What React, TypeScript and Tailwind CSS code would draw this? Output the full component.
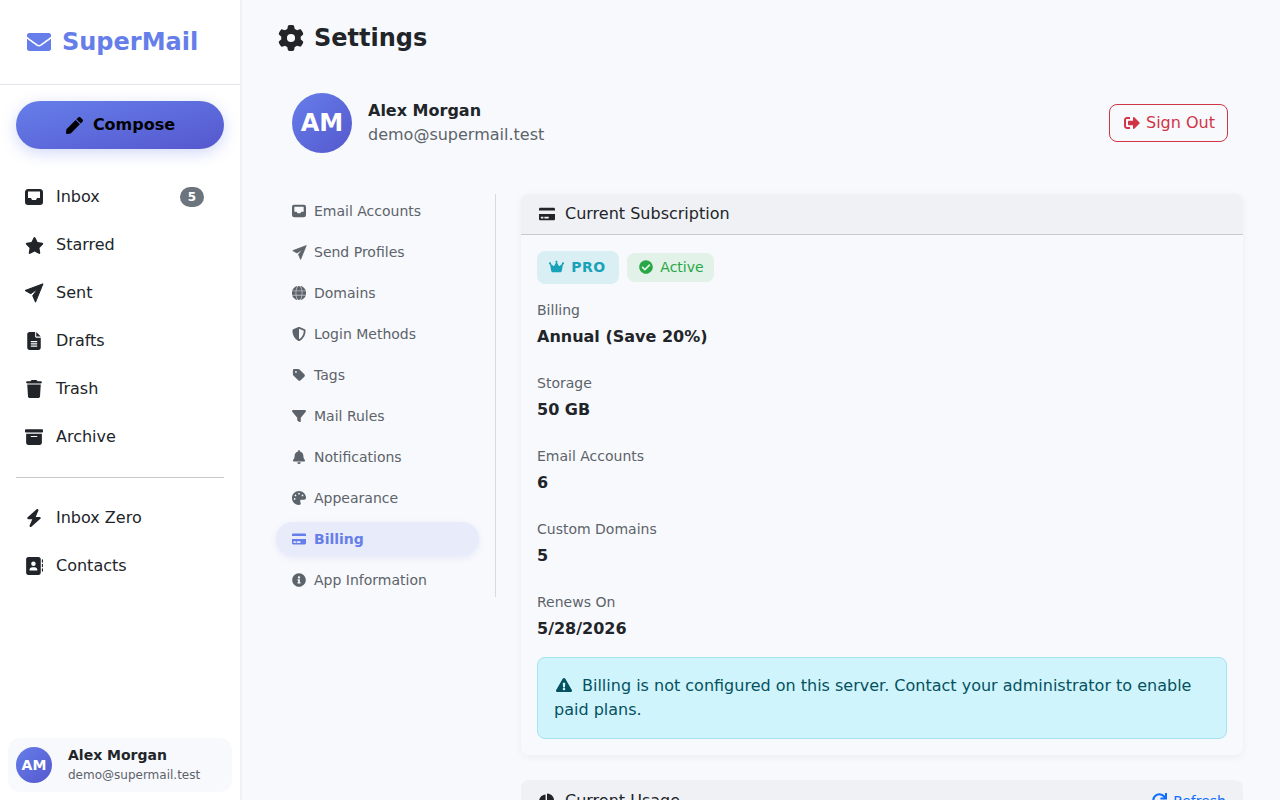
import type { ReactNode } from 'react';
import {
  FaSignOutAlt, FaShieldAlt, FaCreditCard, FaInfoCircle, FaCheckCircle, FaChartPie, FaRedo, FaEnvelope, FaPen,
  FaExclamationTriangle,
} from 'react-icons/fa';
import {
  FaBolt, FaStar, FaFileLines, FaTrash, FaBoxArchive, FaAddressBook, FaGear, FaGlobe, FaTag, FaFilter, FaBell,
  FaPalette, FaCrown,
} from 'react-icons/fa6';

const InboxIcon = ({ size }: { size: number }) => (
  <svg width={size} height={size} viewBox="0 0 18 18" fill="currentColor">
    <path
      fillRule="evenodd"
      d="M3.5 1h11A3 3 0 0 1 18 4v10a3 3 0 0 1-3 3H3a3 3 0 0 1-3-3V4a3 3 0 0 1 3.5-3zM3 3.5V10h3l1 2h4l1-2h3V3.5z"
    />
  </svg>
);

const PlaneIcon = ({ size }: { size: number }) => (
  <svg width={size} height={size} viewBox="0 0 20 20" fill="currentColor" stroke="currentColor" strokeWidth="1" strokeLinejoin="round">
    <path d="M19 .8 1 7.5l5.8 3.2L14 5.5l-5.3 7.2 2.8 6.5z" />
  </svg>
);

const mainNav = [
  { label: 'Inbox', icon: <InboxIcon size={18} />, badge: '5' },
  { label: 'Starred', icon: <FaStar size={19} /> },
  { label: 'Sent', icon: <PlaneIcon size={20} /> },
  { label: 'Drafts', icon: <FaFileLines size={18} /> },
  { label: 'Trash', icon: <FaTrash size={18} /> },
  { label: 'Archive', icon: <FaBoxArchive size={18} /> },
];

const extraNav = [
  { label: 'Inbox Zero', icon: <FaBolt size={18} /> },
  { label: 'Contacts', icon: <FaAddressBook size={18} /> },
];

const tabs = [
  { label: 'Email Accounts', icon: <InboxIcon size={14} /> },
  { label: 'Send Profiles', icon: <PlaneIcon size={15} /> },
  { label: 'Domains', icon: <FaGlobe size={14} stroke="currentColor" strokeWidth={16} /> },
  { label: 'Login Methods', icon: <FaShieldAlt size={14} /> },
  { label: 'Tags', icon: <FaTag size={14} /> },
  { label: 'Mail Rules', icon: <FaFilter size={14} /> },
  { label: 'Notifications', icon: <FaBell size={14} /> },
  { label: 'Appearance', icon: <FaPalette size={14} /> },
  { label: 'Billing', icon: <FaCreditCard size={14} />, active: true },
  { label: 'App Information', icon: <FaInfoCircle size={14} /> },
];

const details = [
  { label: 'Billing', value: 'Annual (Save 20%)' },
  { label: 'Storage', value: '50 GB' },
  { label: 'Email Accounts', value: '6' },
  { label: 'Custom Domains', value: '5' },
  { label: 'Renews On', value: '5/28/2026' },
];

const NavItem = ({ label, icon, badge }: { label: string; icon: ReactNode; badge?: string }) => (
  <div className="flex items-center h-12 pl-6 pr-9 text-[#212529]">
    <span className="w-5 flex justify-center shrink-0">{icon}</span>
    <span className="ml-3 flex-1">{label}</span>
    {badge && (
      <span className="w-6 h-5 rounded-full bg-[#6c757d] text-white text-xs font-bold flex items-center justify-center">
        {badge}
      </span>
    )}
  </div>
);

export default function App() {
  return (
    <div className="flex h-screen overflow-hidden bg-[#f8f9fc] text-[#212529] font-['DejaVu_Sans',sans-serif]">
      {/* Sidebar */}
      <aside className="w-[242px] shrink-0 bg-white border-r-2 border-[#f0f1f6] flex flex-col">
        <div className="h-[85px] border-b border-[#e4e5ea] flex items-center pl-[27px] gap-[11px] text-[#667eea]">
          <FaEnvelope size={24} />
          <span className="text-2xl font-bold">SuperMail</span>
        </div>
        <div className="px-4 pt-4 pb-[4px]">
          <button className="w-full h-12 rounded-3xl bg-gradient-to-br from-[#667eea] to-[#5558cd] text-black font-bold flex items-center justify-center gap-2 shadow-[0_4px_15px_rgba(102,126,234,0.3)]">
            <span className="w-5 flex justify-center">
              <FaPen size={17} />
            </span>
            Compose
          </button>
        </div>
        <nav className="mt-[4px]">
          <div className="pt-[16px]">
            {mainNav.map((item) => (
              <NavItem key={item.label} {...item} />
            ))}
          </div>
          <div className="mx-4 my-4 border-t border-[#c8c9cc]" />
          {extraNav.map((item) => (
            <NavItem key={item.label} {...item} />
          ))}
        </nav>
        <div className="mt-auto mx-2 mb-2 h-[54px] rounded-xl bg-[#f8f9fc] flex items-center px-2 gap-4">
          <div className="w-9 h-9 rounded-full bg-gradient-to-br from-[#667eea] to-[#5558cd] text-white text-sm font-bold flex items-center justify-center">
            AM
          </div>
          <div className="-mt-[2px]">
            <div className="text-sm font-bold leading-[21px]">Alex Morgan</div>
            <div className="text-xs text-[#5c636a] leading-[18px]">demo@supermail.test</div>
          </div>
        </div>
      </aside>

      {/* Main */}
      <main className="flex-1 min-w-0 pl-[34px] pr-[37px] pt-[23px]">
        <h1 className="flex items-center text-2xl font-bold leading-[30px]">
          <span className="w-[30px] flex justify-center">
            <FaGear size={26} />
          </span>
          <span className="ml-2">Settings</span>
        </h1>

        <div className="flex items-center justify-between pl-4 pr-[15px] mt-[40px]">
          <div className="flex items-center gap-4">
            <div className="w-[60px] h-[60px] rounded-full bg-gradient-to-br from-[#667eea] to-[#5558cd] text-white text-2xl font-bold flex items-center justify-center">
              AM
            </div>
            <div>
              <div className="font-bold leading-6">Alex Morgan</div>
              <div className="text-[#5c636a] leading-6">demo@supermail.test</div>
            </div>
          </div>
          <button className="h-[38px] w-[119px] rounded-lg border border-[#d13447] text-[#d13447] flex items-center justify-center gap-[6px] pl-[2px]">
            <FaSignOutAlt size={16} />
            Sign Out
          </button>
        </div>

        <div className="flex items-start mt-[41px]">
          <div className="w-[220px] shrink-0 border-r border-[#d9dadf] pr-4">
            {tabs.map((tab) => (
              <div
                key={tab.label}
                className={`h-[34px] mb-[7px] last:mb-0 rounded-[18px] flex items-center pl-[14px] text-sm ${
                  tab.active
                    ? 'bg-[#e8ebfa] text-[#667eea] font-bold shadow-[0_2px_6px_rgba(102,126,234,0.12)]'
                    : 'text-[#5c636a]'
                }`}
              >
                <span className="w-[18px] flex justify-center shrink-0">{tab.icon}</span>
                <span className="ml-[6px]">{tab.label}</span>
              </div>
            ))}
          </div>

          <div className="flex-1 min-w-0 ml-[25px]">
            <section className="rounded-lg shadow-[0_2px_8px_rgba(0,0,0,0.05)]">
              <header className="h-[41px] px-[18px] flex items-center gap-[10px] bg-[#f0f1f5] border-b border-[#c9cacf] rounded-t-lg">
                <FaCreditCard size={16} />
                <span>Current Subscription</span>
              </header>
              <div className="p-4">
                <div className="flex items-center gap-2">
                  <span className="h-[33px] w-[82px] rounded-lg bg-[#d9eff4] text-[#17a2b8] text-sm font-bold tracking-[0.5px] flex items-center justify-center gap-[7px] pr-[1px] pb-[2px]">
                    <FaCrown size={15} />
                    PRO
                  </span>
                  <span className="h-[29px] w-[87px] rounded-lg bg-[#e2f2e9] text-[#28a745] text-sm flex items-center justify-center gap-[7px] pl-[2px] pb-[2px]">
                    <FaCheckCircle size={14} />
                    Active
                  </span>
                </div>
                <div className="mt-[16px]">
                  {details.map((row) => (
                    <div key={row.label} className="h-[73px]">
                      <div className="text-sm text-[#5c636a] leading-[21px]">{row.label}</div>
                      <div className="font-bold leading-6 mt-[4px]">{row.value}</div>
                    </div>
                  ))}
                </div>
                <div className="mt-[-8px] rounded-lg border border-[#a5e3ee] bg-[#cff4fc] text-[#055160] p-4 leading-6">
                  <FaExclamationTriangle size={16} className="inline-block ml-[2px] mr-[10px] align-[-2px]" />
                  Billing is not configured on this server. Contact your administrator to enable paid plans.
                </div>
              </div>
            </section>

            <section className="mt-[25px] rounded-lg">
              <header className="h-[41px] pl-[18px] pr-[17px] flex items-center gap-[10px] bg-[#f0f1f5] rounded-t-lg">
                <FaChartPie size={16} />
                <span className="flex-1">Current Usage</span>
                <span className="text-sm text-[#0d6efd] flex items-center gap-[6px]">
                  <FaRedo size={15} />
                  Refresh
                </span>
              </header>
            </section>
          </div>
        </div>
      </main>
    </div>
  );
}
